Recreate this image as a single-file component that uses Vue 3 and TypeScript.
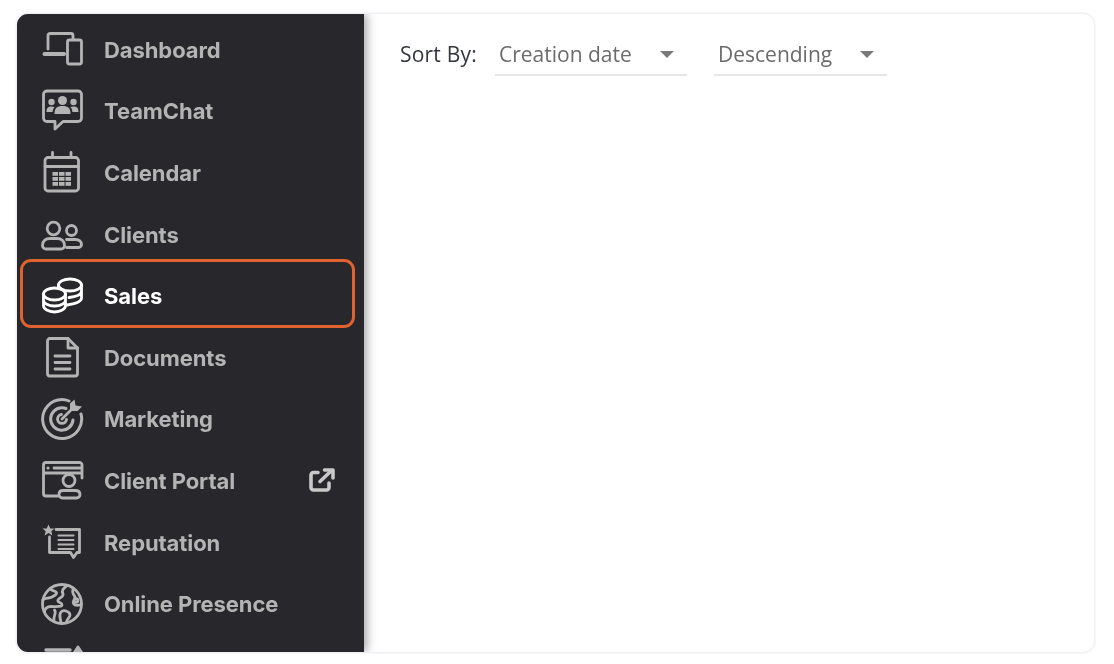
<script setup lang="ts">
interface NavItem {
  label: string
  icon: string
  active?: boolean
  external?: boolean
}

const items: NavItem[] = [
  {
    label: 'Dashboard',
    icon: `<path d="M8 21V7.500A2 2 0 0 1 10 5.500H31A2 2 0 0 1 33 7.500V11"/><path d="M4.500 26H24" stroke-width="4"/><rect x="27.500" y="12" width="14" height="24" rx="2"/>`
  },
  {
    label: 'TeamChat',
    icon: `<path d="M7 2H38A3.500 3.500 0 0 1 41.500 5.500V29A3.500 3.500 0 0 1 38 32.500H23L15 40V32.500H7A3.500 3.500 0 0 1 3.500 29V5.500A3.500 3.500 0 0 1 7 2Z"/><g fill="currentColor" stroke="none"><circle cx="22.500" cy="11.500" r="4.500"/><path d="M14.500 25C14.500 19 17 17 22.500 17S30.500 19 30.500 25Z"/><circle cx="11.500" cy="13" r="3.200"/><path d="M6.500 23C6.500 19 8 17.500 11.500 17.500 12.800 17.500 13.800 17.800 14.500 18.300 13.300 19.500 12.800 21 12.600 23Z"/><circle cx="33.500" cy="13" r="3.200"/><path d="M38.500 23C38.500 19 37 17.500 33.500 17.500 32.200 17.500 31.200 17.800 30.500 18.300 31.700 19.500 32.200 21 32.400 23Z"/></g>`
  },
  {
    label: 'Calendar',
    icon: `<rect x="5" y="6.500" width="33.500" height="33.500" rx="3"/><path d="M5 15.500H38.500M12.500 1.500V6.500M31 1.500V6.500"/><g fill="currentColor" stroke="none"><rect x="12.500" y="21" width="5.500" height="3.800"/><rect x="19" y="21" width="5.500" height="3.800"/><rect x="25.500" y="21" width="5.500" height="3.800"/><rect x="12.500" y="26" width="5.500" height="3.800"/><rect x="19" y="26" width="5.500" height="3.800"/><rect x="25.500" y="26" width="5.500" height="3.800"/><rect x="12.500" y="31" width="5.500" height="3.800"/><rect x="19" y="31" width="5.500" height="3.800"/><rect x="25.500" y="31" width="5.500" height="3.800"/></g>`
  },
  {
    label: 'Clients',
    icon: `<circle cx="13.500" cy="15.500" r="6.300"/><circle cx="31.500" cy="17.500" r="5"/><path d="M6 36H21A3.500 3.500 0 0 0 24.500 32.500C24.500 27.500 21 25.500 17 25.500H10C6 25.500 2.500 27.500 2.500 32.500A3.500 3.500 0 0 0 6 36Z"/><path d="M26.500 26.500H35.500C39 26.500 41.500 28.500 41.500 31.500A3 3 0 0 1 38.500 34.500H26.500"/>`
  },
  {
    label: 'Sales',
    active: true,
    icon: `<ellipse cx="30" cy="11" rx="11.500" ry="6"/><path d="M18.500 11V14M41.500 11V24C41.500 27 38 29.500 27 31M41.500 17C41.500 20 38 22.500 29 23.500"/><ellipse cx="14.500" cy="20" rx="11" ry="6"/><path d="M3.500 20V31.500C3.500 35 8.500 38 14.500 38S25.500 35 25.500 31.500V20M3.500 26C3.500 29.500 8.500 32 14.500 32S25.500 29.500 25.500 26"/>`
  },
  {
    label: 'Documents',
    icon: `<path d="M10 2.500H28L37.500 12V37.500A2.500 2.500 0 0 1 35 40H10A2.500 2.500 0 0 1 7.500 37.500V5A2.500 2.500 0 0 1 10 2.500Z"/><path d="M28 2.500V12H37.500"/><path d="M15 20H30M15 26.500H30M15 33H30"/>`
  },
  {
    label: 'Marketing',
    icon: `<path d="M29 4C26.800 3 24.500 2.500 22 2.500A19.500 19.500 0 1 0 41 17" stroke-width="3"/><path d="M26 11.500C24.800 11 23.400 10.800 22 10.800A11.200 11.200 0 1 0 33 23" stroke-width="3"/><path d="M21.500 17.500A4.500 4.500 0 1 0 26.500 22.500"/><path d="M22 22L34 10"/><path d="M30 13V6.500L34.500 2.500 35.500 8.500 42 9.500 37.500 14H31Z" fill="currentColor" stroke="none"/>`
  },
  {
    label: 'Client Portal',
    external: true,
    icon: `<path d="M18 37H6A2.500 2.500 0 0 1 3.500 34.500V6A2.500 2.500 0 0 1 6 3.500H39.500A2.500 2.500 0 0 1 42 6V19M3.500 14H42M14 9H42"/><circle cx="8" cy="9" r="1.600" fill="currentColor" stroke="none"/><circle cx="29" cy="21.500" r="6"/><path d="M23 31.500H35C38 31.500 40 33 40 35.500A3.500 3.500 0 0 1 36.500 39H22.500A3.500 3.500 0 0 1 19 35.500C19 33 20.500 31.500 23 31.500Z"/>`
  },
  {
    label: 'Reputation',
    icon: `<path d="M16 8.500H39.500V31.500H37L33.500 36.500 30.500 31.500H9.500V16"/><path d="M18.500 14.500H33.500M18.500 19H33.500M18.500 23.500H33.500M18.500 28H33.500" stroke-width="2"/><path d="M8.500 3.500L10.300 7.500H14.500L11.300 10.300 12.400 14.500 8.500 12.100 4.600 14.500 5.700 10.300 2.500 7.500H6.700Z" fill="currentColor" stroke="none"/>`
  },
  {
    label: 'Online Presence',
    icon: `<circle cx="22" cy="22" r="19.500"/><path d="M10 6.500C11 9 14 8 16 10 18 12 14 14 12 15 9.500 16.500 4 16 2.800 18"/><path d="M27 3.500C24 6 21 8 23 12 24 15 19 15.500 18 18 17 21 22 20 22 23 22 25 15 24.500 11 24.500 7 24.500 4.500 27 4.500 30"/><path d="M14 38.500C13 34 17 31 14.500 28"/><path d="M21 41C21 37 18 34 21 30 24 27 30 30 30 33 30 36 26.500 37 26.500 40.500"/><path d="M33.500 6.500C31 10 34 13 35 15 35.500 17 32 19 33.500 21.500 35 24 39 24 41.500 22"/><circle cx="36" cy="18.500" r="1.800"/>`
  },
  {
    label: '',
    icon: `<path d="M6 6H30" stroke-width="3.500"/><path d="M34 9L38 3 42 9" fill="currentColor"/>`
  }
]

const selects = [
  { value: 'Creation date', cls: 'sel-date' },
  { value: 'Descending', cls: 'sel-order' }
]
</script>

<template>
  <div class="page">
    <div class="card">
      <nav class="sidebar">
        <div v-for="(item, i) in items" :key="i" class="row" :class="{ active: item.active }">
          <span v-if="item.active" class="highlight"></span>
          <svg
            class="icon"
            viewBox="0 0 44 44"
            width="44"
            height="44"
            fill="none"
            stroke="currentColor"
            stroke-width="2.800"
            stroke-linecap="round"
            stroke-linejoin="round"
            v-html="item.icon"
          ></svg>
          <span class="label">{{ item.label }}</span>
          <svg
            v-if="item.external"
            class="ext"
            viewBox="0 0 26 24"
            width="26"
            height="24"
            fill="none"
            stroke="currentColor"
            stroke-width="3.600"
            stroke-linecap="round"
            stroke-linejoin="round"
          >
            <path d="M9 4.500H4.500A2.500 2.500 0 0 0 2 7V19.500A2.500 2.500 0 0 0 4.500 22H17.500A2.500 2.500 0 0 0 20 19.500V15" />
            <path d="M11 13.500L22 3" />
            <path d="M15.500 2H24V10" />
          </svg>
        </div>
      </nav>
      <main class="content">
        <div class="sort">
          <span class="sort-label">Sort By:</span>
          <div v-for="s in selects" :key="s.value" class="select" :class="s.cls">
            <span class="value">{{ s.value }}</span>
            <span class="caret"></span>
          </div>
        </div>
      </main>
    </div>
  </div>
</template>

<style>
html,
body {
  margin: 0;
  background: #fff;
}
</style>

<style scoped>
.page {
  width: 1114px;
  height: 664px;
  box-sizing: border-box;
  padding: 13px 19px 11px 16px;
  background: #fff;
  filter: blur(0.5px);
  overflow: hidden;
}
.card {
  display: flex;
  height: 100%;
  box-sizing: border-box;
  border: 1px solid #f0f0f4;
  border-radius: 12px;
  box-shadow: 0 0 0 1px #f7f7f9;
  overflow: hidden;
  background: #fff;
}
.sidebar {
  position: relative;
  flex: 0 0 347px;
  box-sizing: border-box;
  padding-top: 5px;
  background: #28282c;
  color: #b4b4b4;
  box-shadow: 3px 0 9px rgba(0, 0, 0, 0.35);
  overflow: hidden;
  z-index: 1;
}
.row {
  position: relative;
  display: flex;
  align-items: center;
  height: 61.6px;
  padding-left: 23px;
}
.row.active {
  color: #fff;
}
.highlight {
  position: absolute;
  left: 2.5px;
  top: -6px;
  width: 335.5px;
  height: 69px;
  box-sizing: border-box;
  border: 3px solid #e0622f;
  border-radius: 11px;
}
.icon {
  flex: none;
}
.label {
  margin-left: 20px;
  font-family: Inter, "Liberation Sans", sans-serif;
  font-weight: 700;
  font-size: 22px;
  letter-spacing: -0.08px;
  white-space: nowrap;
}
.ext {
  position: absolute;
  left: 292px;
  top: 18px;
  color: #c8c8c8;
}
.content {
  flex: 1;
  min-width: 0;
  padding: 23px 0 0 36px;
}
.sort {
  display: flex;
  align-items: flex-start;
  font-family: "Open Sans", sans-serif;
  font-size: 21px;
}
.sort-label {
  width: 95px;
  height: 37px;
  line-height: 35px;
  font-weight: 500;
  letter-spacing: 0.2px;
  color: #33363d;
}
.select {
  position: relative;
  box-sizing: border-box;
  height: 39px;
  padding-left: 4px;
  line-height: 35px;
  color: #6b6b6b;
  border-bottom: 2px solid #e6e6e6;
}
.sel-date {
  width: 192px;
  margin-right: 27px;
}
.sel-order {
  width: 173px;
}
.caret {
  position: absolute;
  top: 14px;
  right: 13px;
  width: 0;
  height: 0;
  border-left: 7.5px solid transparent;
  border-right: 7.5px solid transparent;
  border-top: 7px solid #7a7a7a;
}
</style>
